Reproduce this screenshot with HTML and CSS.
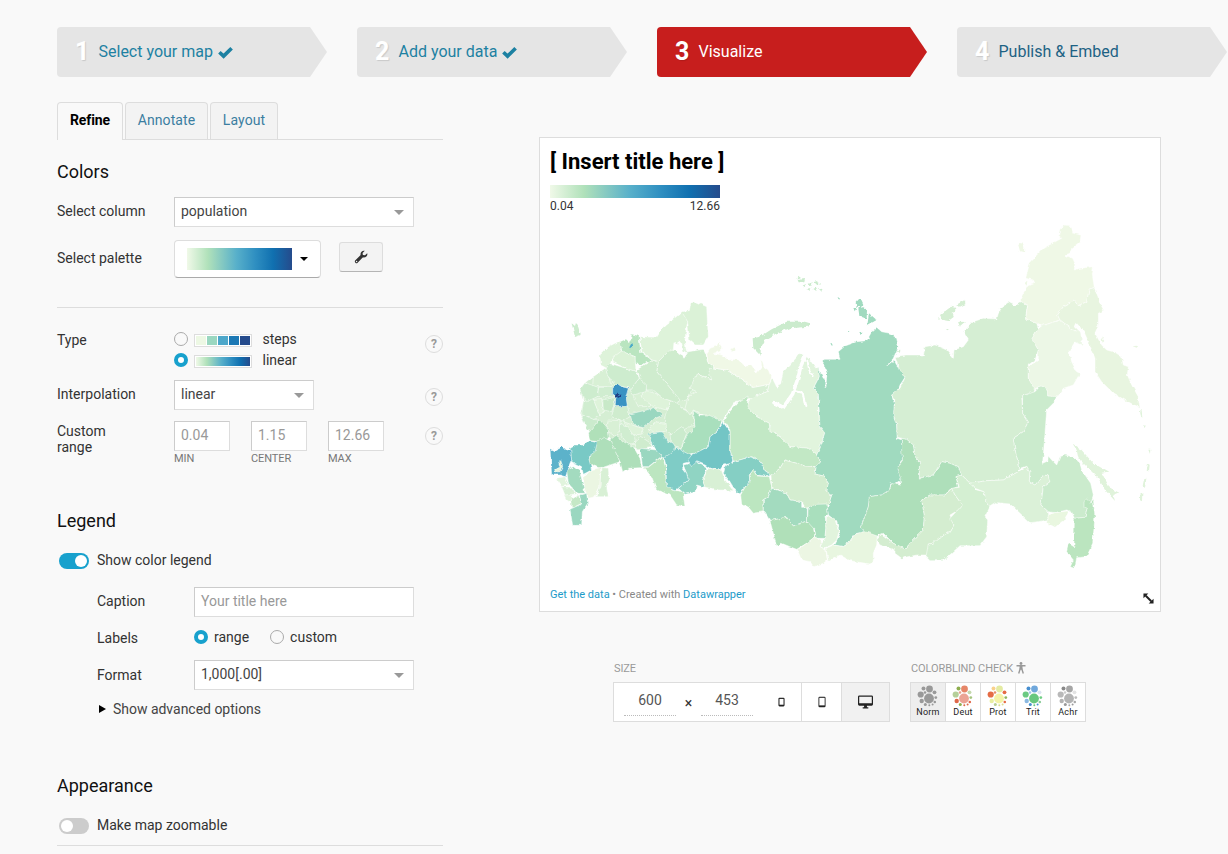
FILE: index.html
```
<!DOCTYPE html>
<html lang="en">
<head>
<meta charset="utf-8">
<title>Visualize map</title>
<link rel="stylesheet" href="styles.css">
</head>
<body>
<nav class="steps">
  <a class="step done"><b>1</b><span>Select your map</span><svg class="check" viewBox="0 0 14 12"><path d="M1.300 5.800 5.200 9.400 12.700 2"/></svg></a>
  <a class="step done"><b>2</b><span>Add your data</span><svg class="check" viewBox="0 0 14 12"><path d="M1.300 5.800 5.200 9.400 12.700 2"/></svg></a>
  <a class="step active"><b>3</b><span>Visualize</span></a>
  <a class="step next"><b>4</b><span>Publish &amp; Embed</span></a>
</nav>
<main class="main">
<section class="controls">
  <div class="tabs"><a class="tab on">Refine</a><a class="tab t2">Annotate</a><a class="tab t3">Layout</a></div>
  <h3 class="h-colors">Colors</h3>
  <div class="row r-column"><label>Select column</label><div class="select w240">population<i></i></div></div>
  <div class="row r-palette"><label>Select palette</label><div class="palette"><span class="ramp"></span><i></i></div><div class="tool"><svg viewBox="0 0 14 14"><path d="M2.5 11.5 7.8 6.2" stroke="#333" stroke-width="3.2" stroke-linecap="round"/><path d="M13.2 3.2 11 5.2 8.8 4.9 8.6 3 10.8.8C8.600 .2 6.600 1.600 6.500 3.900 6.500 6 8 7.400 9.800 7.400 12.400 7.400 13.900 5.200 13.200 3.200Z" fill="#333"/><circle cx="2.600" cy="11.500" r=".7" fill="#f3f3f3"/></svg></div></div>
  <hr class="rule">
  <div class="row r-type"><label>Type</label><div class="types">
    <div class="opt"><span class="radio"></span><span class="swatch steps5"><u class="c1"></u><u class="c2"></u><u class="c3"></u><u class="c4"></u><u class="c5"></u></span>steps</div>
    <div class="opt"><span class="radio sel"></span><span class="swatch"><u class="ramp"></u></span>linear</div>
  </div><span class="help">?</span></div>
  <div class="row r-interp"><label>Interpolation</label><div class="select w140">linear<i></i></div><span class="help">?</span></div>
  <div class="row r-range"><label>Custom<br>range</label><div class="ranges"><div><div class="num">0.04</div><small>MIN</small></div><div><div class="num">1.15</div><small>CENTER</small></div><div><div class="num">12.66</div><small>MAX</small></div></div><span class="help">?</span></div>
  <h3 class="h-legend">Legend</h3>
  <div class="row r-toggle"><span class="toggle sel"></span>Show color legend</div>
  <div class="row sub r-caption"><label>Caption</label><div class="select w220 hint">Your title here</div></div>
  <div class="row sub r-labels"><label>Labels</label><span class="radio sel"></span><span class="rl">range</span><span class="radio"></span><span class="rl">custom</span></div>
  <div class="row sub r-format"><label>Format</label><div class="select w220">1,000[.00]<i></i></div></div>
  <div class="row sub r-adv"><i class="tri"></i>Show advanced options</div>
  <h3 class="h-appear">Appearance</h3>
  <div class="row r-toggle"><span class="toggle"></span>Make map zoomable</div>
  <hr class="rule last">
</section>
<section class="preview">
  <div class="chart">
    <h1>[ Insert title here ]</h1>
    <div class="legend ramp"></div>
    <div class="ends"><span>0.04</span><span>12.66</span></div>
    <svg class="map" viewBox="540 215 620 365">
      <defs><filter id="coast" filterUnits="userSpaceOnUse" x="540" y="215" width="620" height="365" color-interpolation-filters="sRGB"><feTurbulence type="fractalNoise" baseFrequency=".22" numOctaves="2" seed="4"/><feDisplacementMap in="SourceGraphic" scale="3.5" xChannelSelector="R" yChannelSelector="G"/></filter></defs>
      <g filter="url(#coast)" class="regions">
      <!-- central base -->
      <g transform="translate(540 380) scale(.33333)">
        <path fill="#d5eed3" d="M120 28 135 8 158-10 210-30 300-10 350-25 420 55 480 0 560 70 540 100 460 92 465 140 440 210 400 215 380 180 330 160 340 200 300 210 220 180 150 155 120 105 130 65Z"/>
        <path fill="#d0edd0" d="M130 65 160 55 180 105 160 120 125 100Z"/>
        <path fill="#def3da" d="M160 58 185 55 190 95 180 108Z"/>
        <path fill="#cbebcd" d="M122 100 160 118 176 120 150 157 135 135Z"/>
        <path fill="#c8e9c8" d="M188 60 225 52 222 72 215 95 190 90Z"/>
        <path fill="#cfecce" d="M222 80 262 76 270 110 245 125 215 110Z"/>
        <path fill="#d8f0d5" d="M205 120 240 122 240 150 225 170 200 150Z"/>
        <path fill="#d0edd0" d="M243 130 280 150 288 195 262 190 238 160Z"/>
        <path fill="#cfecce" d="M300 168 340 195 332 203 290 210 285 190Z"/>
        <path fill="#def3da" d="M250 125 305 145 310 162 280 165Z"/>
        <path fill="#d8f0d5" d="M275 40 300 30 340 60 330 80 295 80Z"/>
        <path fill="#def3da" d="M300 50 320 32 360 45 395 65 380 90 340 80Z"/>
        <path fill="#cfecce" d="M380 90 395 65 415 50 425 85 462 105 460 135 430 150 395 165 370 150 375 110Z"/>
        <path fill="#def3da" d="M345 125 378 130 380 152 350 160 325 150Z"/>
        <path fill="#cbebcd" d="M390 165 425 140 440 160 422 207 395 198Z"/>
        <path fill="#d8f0d5" d="M425 55 440 30 480 -10 560 20 550 70 500 80 480 105 455 98 430 85 412 70Z"/>
      </g>
      <g transform="translate(540 290) scale(.33333)">
        <path fill="#dbf2d7" d="M425 65 448 62 452 40 468 36 500 50 502 90 505 140 490 165 465 165 448 150 443 95 430 85Z"/>
        <path fill="#def3da" d="M425 65 415 75 390 95 370 110 350 142 300 140 305 185 335 210 355 215 400 180 402 155 415 165 418 150 425 160 430 185 440 192 435 150 440 110 443 95Z"/>
        <path fill="#cfecce" d="M355 215 385 185 402 178 425 195 432 205 445 185 490 178 498 195 505 220 525 235 515 270 470 250 460 295 440 330 420 335 395 300 370 270 350 245Z"/>
        <path fill="#bae5c0" d="M275 132 297 137 302 185 335 210 300 228 285 220 285 200 245 185 240 155 258 147 270 158Z"/>
        <path fill="#def3da" d="M240 152 245 185 215 210 210 225 200 235 182 225 180 195 205 170Z"/>
        <path fill="#dbf2d7" d="M245 183 285 200 288 245 270 240 215 215 222 200Z"/>
        <path fill="#cdecce" d="M210 220 290 245 298 265 275 295 245 290 225 280 205 265 195 240Z"/>
        <path fill="#d8f0d5" d="M160 260 195 235 207 265 215 290 175 290 158 290Z"/>
        <path fill="#cfecce" d="M290 240 335 210 355 215 350 245 420 330 415 340 370 325 340 300 320 300 300 265Z"/>
        <path fill="#cdecce" d="M298 265 320 285 318 305 280 315 270 300Z"/>
        <path fill="#cdecce" d="M120 298 135 278 175 292 172 320 140 335 125 315Z"/>
        <path fill="#d0edd0" d="M176 292 218 292 222 320 172 320Z"/>
        <path fill="#3a93c3" d="M218 295 232 280 245 290 265 295 258 320 262 348 225 350 228 325 218 310Z"/>
        <path class="capital" d="M224 324 243 313M226 316 234 314"/>
        <path class="isle" fill="#4dabc8" d="M268 172 276 157 279 166 272 178Z"/>
        <path class="isle" fill="#cdecce" d="M95 100 105 108 108 98 115 112 122 135 105 141Z"/>
      </g>
      <!-- south-west -->
      <g transform="translate(540 380) scale(.33333)">
        <path fill="#9ad7c0" d="M270 102 320 90 340 83 370 105 345 115 310 143 290 138 275 120Z"/>
        <path fill="#b0e0b9" d="M178 118 205 150 208 175 175 185 150 182 145 160Z"/>
        <path fill="#aedfba" d="M150 200 190 172 215 185 240 245 195 260 180 265 165 255 145 260 148 230Z"/>
        <path fill="#79c9c5" d="M90 205 105 195 130 195 145 182 172 188 165 215 145 230 155 270 130 283 125 260 95 245Z"/>
        <path fill="#5cb2ca" d="M30 205 45 212 68 200 80 210 92 210 95 245 88 260 75 290 60 285 35 285Z"/>
        <path fill="#e8f6e0" d="M56 245 62 240 68 260 60 275 46 276 44 268 60 262Z"/>
        <path fill="#aedfba" d="M210 180 230 165 240 180 280 200 300 235 305 263 265 265 248 275 240 245Z"/>
        <path fill="#9ad7c0" d="M300 205 350 210 370 225 325 260 308 260Z"/>
        <path fill="#bce6c0" d="M310 262 325 262 368 228 376 260 378 300 395 330 430 335 430 345 435 380 410 375 390 345 350 330 335 290Z"/>
        <path fill="#85cfc4" d="M325 160 365 155 380 180 405 195 405 220 372 235 345 205Z"/>
        <path fill="#90d4c3" d="M470 245 500 265 488 300 495 322 470 315 465 337 435 343 415 325 445 300 440 280 430 255Z"/>
        <path fill="#7fccc6" d="M372 235 410 205 435 210 475 240 430 250 428 265 440 280 445 300 405 333 380 320 378 260Z"/>
        <path fill="#a3dbbf" d="M80 270 100 260 120 275 135 340 110 340 85 310Z"/>
        <path fill="#ebf6e2" d="M128 290 155 270 182 262 180 320 165 350 145 355 135 330Z"/>
        <path fill="#d8f0d5" d="M183 262 205 265 208 300 200 320 205 350 170 350 180 320Z"/>
        <path fill="#e1f4dd" d="M48 295 75 290 88 315 65 320ZM72 345 95 340 98 358 82 365Z"/>
        <path fill="#d8f0d5" d="M65 320 95 322 108 342 75 345Z"/>
        <path fill="#c5e8c6" d="M92 360 115 345 125 370 95 385Z"/>
        <path fill="#9ad7c0" d="M118 345 140 340 143 370 127 395 125 436 98 436 90 388 125 372Z"/>
      </g>
      <!-- urals and west siberia -->
      <g transform="translate(690 270) scale(.33333)">
        <path fill="#d9f0d6" d="M55 295 75 295 110 300 150 325 190 352 238 343 232 365 180 385 135 395 105 440 98 457 60 445 10 420 0 435-15 415-5 380 20 365 0 355 20 310 65 330Z"/>
        <path fill="#f0f8e6" d="M50 250 60 235 80 228 85 215 98 235 88 245 70 250 95 255 115 270 140 268 160 280 165 290 185 285 200 310 215 290 212 270 218 275 222 290 235 300 245 325 238 343 190 352 150 325 110 300 75 295 55 280ZM120 238 130 232 138 240 130 247Z"/>
        <path fill="#e1f4dd" d="M238 343 247 325 262 355 272 340 280 305 320 262 325 250 345 256 360 270 378 295 388 290 388 320 370 355 385 370 385 420 390 470 405 490 395 520 380 555 355 535 330 532 300 530 270 500 240 485 238 460 200 440 170 415 180 385 232 365Z"/>
        <path fill="#a0dabf" d="M402 268 450 268 445 245 465 228 500 215 530 212 545 185 560 172 575 185 600 190 620 205 625 230 610 265 590 288 612 270 620 285 635 300 645 322 630 345 620 370 605 375 612 400 615 440 612 440 620 465 622 505 635 510 637 540 638 570 625 590 635 630 615 645 602 642 600 660 575 675 540 680 535 710 522 750 512 770 525 785 495 792 475 820 460 830 433 825 450 790 440 755 415 735 412 720 415 705 425 675 410 665 415 640 400 618 375 612 378 590 392 575 380 555 395 520 405 490 390 470 385 370 370 355 388 320 385 290 402 330 410 320 398 285Z"/>
        <path class="isle" fill="#cbebcd" d="M188 205 210 200 245 178 290 155 345 155 360 160 355 170 300 175 260 190 225 210 212 235 212 257 190 235Z"/>
        <path class="isle" fill="#cbebcd" d="M324 17 333 24 323 29ZM323 30 345 27 343 37 326 37ZM355 42 368 37 364 51ZM372 36 382 33 381 44ZM349 56 364 54 361 63ZM369 56 380 53 379 63ZM384 58 398 56 393 65ZM385 42 391 37 392 44ZM338 45 346 43 344 52Z"/>
        <path class="isle" fill="#a0dabf" d="M510 84 520 105 512 112 499 110 497 98ZM505 115 520 112 531 118 530 146 508 138ZM537 130 560 150 532 166ZM490 113 500 114 494 124ZM442 83 450 82 448 89ZM421 220 429 220 425 227ZM474 183 478 183 476 188ZM511 190 517 187 515 195Z"/>
        <g class="water"><path stroke-width="11" d="M346 256 332 290 322 330 308 372 280 412 252 398"/><path stroke-width="6" d="M312 362 338 368 346 408"/><path stroke-width="6" d="M352 272 358 300 368 318M394 276 408 310 406 350"/></g>
      </g>
      <g transform="translate(690 400) scale(.33333)">
        <path fill="#a9dfbd" d="M10 32 30 45 55 45 95 62 85 90 60 110 55 140 15 160-5 162-28 150-12 110 15 80Z"/>
        <path fill="#c2e8c5" d="M172 15 180 30 200 50 238 70 240 95 270 110 300 140 330 142 355 145 380 165 392 185 378 200 345 198 320 190 285 180 270 205 245 225 225 212 210 185 185 170 130 185 120 150 120 90 103 65 115 40 145 5 174-12Z"/>
        <path fill="#73c5c5" d="M98 65 120 95 120 150 128 180 125 190 100 195 90 210 60 205 45 195 20 185 5 200-8 182 5 165 15 160 55 140 60 110 85 90Z"/>
        <path fill="#85cfc4" d="M100 220 105 200 130 185 185 170 210 185 225 212 240 222 235 230 200 225 190 210 178 225 180 250 165 260 150 282 135 270 120 245Z"/>
        <path fill="#d8f0d5" d="M55 205 95 212 105 240 130 272 90 270 45 262 38 240Z"/>
        <path fill="#bce6c0" d="M190 210 200 228 238 230 245 262 235 290 218 300 220 335 190 340 178 325 155 312 152 285 165 262 180 248 178 225Z"/>
        <path fill="#d4edd0" d="M245 262 243 225 270 205 285 180 320 190 345 198 378 200 375 222 400 228 415 250 410 275 425 285 415 315 380 315 345 322 335 305 300 300 290 280Z"/>
        <path fill="#a3dbbf" d="M220 300 235 290 245 265 290 280 300 300 335 305 335 322 352 322 352 360 345 365 310 378 290 352 240 362 225 338 220 335Z"/>
        <path fill="#b0e0b9" d="M240 362 290 352 310 378 345 365 368 372 375 410 350 430 320 448 300 440 275 430 260 437Z"/>
        <path fill="#a9dfbd" d="M355 320 380 313 410 312 415 345 405 345 408 380 405 415 378 415 375 390 352 365Z"/>
        <path fill="#e1f4dd" d="M410 345 435 360 447 395 440 420 425 435 400 445 390 440 405 415Z"/>
        <path fill="#ecf6e3" d="M322 450 350 430 375 410 395 425 390 440 408 450 412 480 400 490 372 500 360 485 335 480Z"/>
        <path fill="#e8f6e0" d="M408 445 430 435 460 440 475 430 495 402 530 393 562 408 560 435 550 460 550 485 540 492 480 482 450 465 415 485Z"/>
      </g>
      <!-- far east, northern half -->
      <g transform="translate(880 215) scale(.33333)">
        <path fill="#d5eed3" d="M45 425 75 420 130 420 135 395 165 390 200 405 220 430 222 405 250 395 265 375 250 350 280 320 310 310 350 312 360 280 385 262 405 272 425 260 443 270 437 310 470 325 475 340 458 370 475 405 465 435 445 450 445 490 465 520 462 535 425 543 428 595 445 620 430 650 400 670 405 705 420 760 415 770 370 795 320 797 270 805 245 780 235 755 210 745 185 740 160 780 118 790 118 740 105 725 100 690 80 673 52 667 50 625 40 600 45 555 35 540 60 520 75 488 55 455Z"/>
        <path class="isle" fill="#d5eed3" d="M180 300 200 285 213 275 225 278 226 290 218 293 222 305 205 318 188 315ZM228 270 255 254 256 268 238 276ZM234 320 258 321 240 336ZM50 406 61 404 60 414ZM174 310 180 312 178 318ZM198 342 207 342 202 346Z"/>
        <path fill="#eff8e6" d="M418 258 440 215 465 205 460 195 437 190 450 140 490 100 545 70 535 60 540 42 560 25 575 42 580 55 603 60 600 80 575 100 570 115 555 120 578 130 585 145 583 165 600 160 640 155 637 180 643 218 628 222 620 260 595 272 583 258 550 275 533 300 540 315 485 333 470 325 437 310 443 270 425 260Z"/>
        <path class="isle" fill="#eff8e6" d="M415 90 427 81 433 96 432 112 420 109ZM432 202 442 198 440 212Z"/>
        <path fill="#e8f5e0" d="M643 218 660 265 672 287 655 295 655 330 645 355 665 390 680 405 705 412 725 425 730 450 745 455 742 480 755 510 775 545 780 580 740 558 700 535 665 500 645 470 645 430 625 380 612 350 590 325 585 335 600 350 580 345 540 315 533 300 550 275 583 258 595 272 620 260 628 222Z"/>
        <path class="isle" fill="#e8f5e0" d="M663 364 673 378 668 383ZM757 393 775 392 770 398Z"/>
        <path fill="#ecf7e6" d="M485 333 540 315 580 345 602 352 607 390 585 380 567 410 575 440 590 470 600 475 580 510 550 520 530 550 503 543 500 525 483 513 465 525 445 490 445 455 475 435 475 405 455 372 475 340Z"/>
      </g>
      <!-- far east, southern half -->
      <g transform="translate(880 400) scale(.33333)">
        <path fill="#aedfba" d="M65 115 80 118 100 135 105 170 118 185 118 235 160 225 185 185 210 190 235 200 245 225 228 230 235 260 210 268 195 285 150 285 125 300 133 345 130 390 100 420 75 447 40 430 10 400-8 408-45 395-58 380-45 350-35 320-32 290 5 285 30 268 35 250 60 255 62 235 50 205 68 185 65 150Z"/>
        <path fill="#d4edd0" d="M5 402 40 430 75 447 100 420 130 390 133 345 125 300 150 285 195 285 215 265 225 285 247 315 235 330 210 345 222 375 210 395 175 415 160 430 145 432 145 465 110 465 65 475 45 460 45 450 0 435-10 420Z"/>
        <path fill="#d4efd2" d="M228 230 245 225 270 250 290 270 312 275 318 300 330 320 315 350 323 360 320 410 300 437 240 437 215 460 190 482 150 482 138 470 145 432 160 430 175 415 210 395 222 375 210 355 247 315 225 285 215 265 238 262Z"/>
        <path fill="#dbf1d8" d="M270 250 320 242 370 240 415 215 440 198 450 215 448 245 465 255 490 225 505 228 510 245 490 260 483 315 505 335 508 358 475 365 450 368 420 340 390 312 350 308 330 320 318 300 312 275 285 265Z"/>
        <path fill="#cbebcd" d="M428-12 465-25 480-42 500-35 503-12 530-10 520 10 500 30 495 100 488 190 503 183 505 168 515 180 530 195 540 170 555 165 580 170 600 190 605 210 632 250 640 285 632 310 620 330 615 352 583 355 575 335 560 330 525 338 505 335 483 315 490 260 510 245 505 228 490 225 465 255 448 245 450 215 440 198 420 205 405 150 400 115 430 95 445 65 428 40Z"/>
        <path fill="#e9f7e0" d="M505 345 525 338 568 332 552 360 525 382 503 370Z"/>
        <path fill="#bbe5bf" d="M640 298 645 350 638 430 620 470 590 473 587 490 582 505 571 500 580 480 560 455 565 430 582 440 583 355 615 352 622 325 612 320 612 305 622 295 630 310Z"/>
        <path class="isle" fill="#e0f3db" d="M578 131 600 145 640 190 685 215 665 218 690 265 718 278 700 285 705 303 675 270 655 235 625 205 595 175 590 150Z"/>
        <path class="isle" fill="#e0f3db" d="M780 285 787 279 786 304 780 301ZM788 260 793 237 799 236 795 263ZM800 212 804 191 809 194 807 214ZM805 149 811 149 810 162ZM780 30 785 31 787 53 782 49ZM789 76 797 78 793 84Z"/>
      </g>
      </g>
    </svg>
    <div class="foot"><a>Get the data</a> • Created with <a>Datawrapper</a></div>
    <svg class="resize" viewBox="0 0 12 12"><path d="M3 3 9 9" stroke="#222" stroke-width="2.200"/><path d="M.5.5H5.800L.5 5.800ZM11.500 11.500H6.200L11.500 6.200Z" fill="#222"/></svg>
  </div>
  <div class="options">
    <div class="size"><h4>SIZE</h4><div class="box"><div class="dims"><span>600</span><em>×</em><span>453</span></div>
      <div class="dev d1"><svg width="7" height="10" viewBox="0 0 8 11"><rect x=".5" y=".5" width="7" height="10" rx="1.300" fill="#222"/><path fill="#fff" d="M1.700 2H6.300V8.600H1.700Z"/></svg></div>
      <div class="dev d2"><svg width="8" height="12" viewBox="0 0 9 13"><rect x=".5" y=".5" width="8" height="12" rx="1.400" fill="#222"/><path fill="#fff" d="M1.500 1.800H7.500V10.300H1.500Z"/></svg></div>
      <div class="dev d3"><svg width="15" height="14" viewBox="0 0 16 14"><path fill="#222" fill-rule="evenodd" d="M1.500 0H14.500Q16 0 16 1.500V9.500Q16 11 14.500 11H9.500V12.500H11V14H5V12.500H6.500V11H1.500Q0 11 0 9.500V1.500Q0 0 1.500 0ZM1.300 1.300V8.200H14.700V1.300Z"/></svg></div></div></div>
    <div class="cb"><h4>COLORBLIND CHECK <svg width="10" height="12" viewBox="0 0 10 12"><circle cx="5" cy="1.500" r="1.400" fill="#999"/><path d="M.5 3.800H9.500M5 3.500V7.500M4.300 6.500 2.700 11.500M5.700 6.500 7.300 11.500" stroke="#999" stroke-width="1.400" fill="none"/><path d="M3.500 4H6.500V7.500H3.500Z" fill="#999"/></svg></h4><div class="box">
      <div class="vis cur"><svg viewBox="0 0 22 22"><g fill="#999"><circle cx="12" cy="13.500" r="4.900"/><circle cx="12.500" cy="4" r="3.400"/><circle cx="3.700" cy="9.500" r="3.100"/><circle cx="4.700" cy="16" r="2.200"/><circle cx="6.500" cy="3.600" r="2"/><circle cx="17.500" cy="7.300" r="1.900"/><circle cx="8" cy="7.500" r="1.300"/><circle cx="18.800" cy="12.600" r="1.400"/><circle cx="17.800" cy="17" r="1.300"/><circle cx="8.300" cy="19.600" r="1.500"/><circle cx="12.300" cy="20.300" r="1"/><circle cx="15.600" cy="19.400" r="1"/></g></svg>Norm</div>
      <div class="vis"><svg viewBox="0 0 22 22"><circle cx="12" cy="13.500" r="4.900" fill="#eba394"/><circle cx="12.500" cy="4" r="3.400" fill="#e68668"/><circle cx="3.700" cy="9.500" r="3.100" fill="#b5cf99"/><circle cx="4.700" cy="16" r="2.200" fill="#df6849"/><circle cx="6.500" cy="3.600" r="2" fill="#8eae4f"/><circle cx="17.500" cy="7.300" r="1.900" fill="#c5d9ad"/><circle cx="8" cy="7.500" r="1.300" fill="#e5a18c"/><circle cx="18.800" cy="12.600" r="1.400" fill="#a5c47f"/><circle cx="17.800" cy="17" r="1.300" fill="#df6849"/><circle cx="8.300" cy="19.600" r="1.500" fill="#8eae4f"/><circle cx="12.300" cy="20.300" r="1" fill="#df6849"/><circle cx="15.600" cy="19.400" r="1" fill="#df6849"/></svg>Deut</div>
      <div class="vis"><svg viewBox="0 0 22 22"><circle cx="12" cy="13.500" r="4.900" fill="#f4f3a7"/><circle cx="12.500" cy="4" r="3.400" fill="#e4eba2"/><circle cx="3.700" cy="9.500" r="3.100" fill="#e56c45"/><circle cx="4.700" cy="16" r="2.200" fill="#e9efa1"/><circle cx="6.500" cy="3.600" r="2" fill="#f9d18c"/><circle cx="17.500" cy="7.300" r="1.900" fill="#e56c45"/><circle cx="8" cy="7.500" r="1.300" fill="#e88e68"/><circle cx="18.800" cy="12.600" r="1.400" fill="#91b65e"/><circle cx="17.800" cy="17" r="1.300" fill="#e56c45"/><circle cx="8.300" cy="19.600" r="1.500" fill="#b9cf91"/><circle cx="12.300" cy="20.300" r="1" fill="#d9dd91"/><circle cx="15.600" cy="19.400" r="1" fill="#d9dd91"/></svg>Prot</div>
      <div class="vis"><svg viewBox="0 0 22 22"><circle cx="12" cy="13.500" r="4.900" fill="#67c77e"/><circle cx="12.500" cy="4" r="3.400" fill="#70a8dc"/><circle cx="3.700" cy="9.500" r="3.100" fill="#6bca82"/><circle cx="4.700" cy="16" r="2.200" fill="#8bb9e2"/><circle cx="6.500" cy="3.600" r="2" fill="#478fd0"/><circle cx="17.500" cy="7.300" r="1.900" fill="#dce4f2"/><circle cx="8" cy="7.500" r="1.300" fill="#a5c5e5"/><circle cx="18.800" cy="12.600" r="1.400" fill="#70cf85"/><circle cx="17.800" cy="17" r="1.300" fill="#8acb98"/><circle cx="8.300" cy="19.600" r="1.500" fill="#478fd0"/><circle cx="12.300" cy="20.300" r="1" fill="#67c77e"/><circle cx="15.600" cy="19.400" r="1" fill="#478fd0"/></svg>Trit</div>
      <div class="vis"><svg viewBox="0 0 22 22"><circle cx="12" cy="13.500" r="4.900" fill="#b4b4b4"/><circle cx="12.500" cy="4" r="3.400" fill="#a6a6a6"/><circle cx="3.700" cy="9.500" r="3.100" fill="#b9b9b9"/><circle cx="4.700" cy="16" r="2.200" fill="#b3b3b3"/><circle cx="6.500" cy="3.600" r="2" fill="#898989"/><circle cx="17.500" cy="7.300" r="1.900" fill="#e3e3e3"/><circle cx="8" cy="7.500" r="1.300" fill="#ccc"/><circle cx="18.800" cy="12.600" r="1.400" fill="#bbb"/><circle cx="17.800" cy="17" r="1.300" fill="#aaa"/><circle cx="8.300" cy="19.600" r="1.500" fill="#999"/><circle cx="12.300" cy="20.300" r="1" fill="#aaa"/><circle cx="15.600" cy="19.400" r="1" fill="#999"/></svg>Achr</div>
    </div></div>
  </div>
</section>
</main>
</body>
</html>
```
FILE: styles.css
```
* { box-sizing: border-box; }
html, body { margin: 0; }
body { width: 1228px; height: 854px; overflow: hidden; background: #f9f9f9; font: 14px/20px Roboto, sans-serif; color: #333; }
h1, h3, h4 { margin: 0; }
u { text-decoration: none; }
.ramp { background: linear-gradient(90deg, #f0f9e8 0%, #b0e1ba 20%, #58b0ca 47%, #2f8fc1 65%, #1070b0 82%, #254b8c 100%); }

.steps { display: flex; gap: 30px; padding: 27px 0 0 57px; height: 77px; }
.step { flex: 0 0 270px; height: 50px; display: flex; align-items: center; padding-left: 18px; border-radius: 4px; background: #e5e5e5; clip-path: polygon(0 0, 253px 0, 270px 50%, 253px 100%, 0 100%); font-size: 16px; color: #1d81a2; }
.step b { width: 23.5px; font-size: 25px; font-weight: 700; color: #fff; text-shadow: 1px 1px 1px rgba(0, 0, 0, .12); }
.step.active { background: #c71e1d; color: #fff; }
.step.next { color: #1d6284; }
.check { width: 15px; height: 13px; margin-left: 5px; fill: none; stroke: #1d81a2; stroke-width: 3.4; }

.main { display: flex; }
.controls { width: 386px; margin-left: 57px; }
.tabs { display: flex; gap: 2px; margin-top: 25px; height: 38px; border-bottom: 1px solid #ddd; }
.tab { height: 37px; border: 1px solid #ddd; border-bottom: 0; border-radius: 4px 4px 0 0; text-align: center; line-height: 35px; background: #f3f3f3; color: #3b7ea1; width: 83px; letter-spacing: .1px; }
.tab.on { width: 66px; height: 38px; background: #f9f9f9; color: #000; font-weight: 700; letter-spacing: -.1px; }
.tab.t3 { width: 68px; }
h3 { font-size: 18px; font-weight: 400; line-height: 24px; color: #111; }
.h-colors { margin-top: 20px; }
.row { display: flex; align-items: flex-start; }
label { flex: 0 0 117px; line-height: 16px; }
.select { height: 30px; border: 1px solid #ccc; border-right-color: #ddd; border-bottom-color: #ddd; background: #fff; padding: 0 9px 0 6px; line-height: 26px; color: #444; display: flex; justify-content: space-between; align-items: flex-start; }
.select i { margin-top: 12px; border: 5px solid transparent; border-top-color: #999; border-bottom: 0; }
.w240 { width: 240px; } .w140 { width: 140px; } .w220 { width: 220px; }
.hint, .num { color: #999; }
.r-column { margin-top: 13px; }
.r-column label { margin-top: 6px; }
.r-palette { margin-top: 13px; }
.r-palette label { margin-top: 10px; }
.palette { width: 147px; height: 38px; border: 1px solid #ddd; border-bottom-color: #aaa; border-radius: 4px; background: #fff; display: flex; align-items: center; padding-left: 12px; gap: 8px; }
.palette .ramp { width: 105px; height: 22px; }
.palette i { border: 4px solid transparent; border-top-color: #000; border-bottom: 0; }
.tool { width: 44px; height: 30px; margin: 2px 0 0 18px; border: 1px solid #ddd; border-bottom-color: #b5b5b5; border-radius: 3px; background: #f3f3f3; display: flex; justify-content: center; align-items: center; }
.tool svg { width: 14px; height: 14px; }
.rule { margin: 29px 0 0; border: 0; height: 1px; background: #ddd; }
.r-type { margin-top: 20px; height: 42px; }
.r-type label { margin-top: 4px; }
.types { flex: 1; }
.opt { height: 21px; display: flex; align-items: center; }
.radio { flex: none; width: 14px; height: 14px; border: 1px solid #aaa; border-radius: 50%; background: #f9f9f9; }
.radio.sel { border: 4px solid #18a1cd; background: #fff; }
.swatch { width: 58px; height: 13px; margin: 4px 10.5px 0 6px; border: 1px solid #ddd; background: #fff; padding: 1px; display: flex; gap: 1px; }
.swatch u { flex: 1; }
.c1 { background: #edf8e4; } .c2 { background: #9ad7c0; } .c3 { background: #4da7ca; } .c4 { background: #1c79b5; } .c5 { background: #254b8c; }
.help { flex: none; width: 18px; height: 18px; margin-left: auto; border: 1px solid #ddd; border-radius: 50%; font-size: 12px; line-height: 16px; font-weight: 700; text-align: center; color: #999; }
.r-type .help { margin-top: 7px; }
.r-interp { margin-top: 10px; }
.r-interp label { margin-top: 6px; }
.r-interp .help { margin-top: 8px; }
.r-range { margin-top: 11px; }
.r-range label { margin-top: 2px; }
.r-range .help { margin-top: 6px; }
.ranges { display: flex; gap: 21px; }
.num { width: 56px; height: 30px; border: 1px solid #ccc; border-right-color: #ddd; border-bottom-color: #ddd; background: #fff; padding-left: 6px; line-height: 27px; }
small { display: block; font-size: 11px; line-height: 14px; padding-top: 1px; height: 14px; color: #777; letter-spacing: -.1px; }
.h-legend { margin-top: 44px; }
.r-toggle { margin-top: 16px; align-items: center; height: 22px; }
.toggle { width: 30px; height: 16px; margin: 2px 8px 0 2px; border-radius: 8px; background: #ccc; padding: 2px; }
.toggle::after { content: ""; display: block; width: 12px; height: 12px; border-radius: 50%; background: #fff; }
.toggle.sel { background: #18a1cd; }
.toggle.sel::after { margin-left: auto; }
.sub { margin-left: 40px; }
.sub label { flex-basis: 97px; }
.r-caption { margin-top: 16px; }
.r-caption label { margin-top: 6px; }
.r-labels { margin-top: 10px; height: 20px; align-items: center; }
.r-labels label { padding-top: 2px; }
.rl { margin-left: 6px; margin-right: 21px; }
.r-format { margin-top: 13px; }
.r-format label { margin-top: 7px; }
.r-adv { margin-top: 9px; align-items: center; letter-spacing: -.02px; color: #444; }
.tri { margin: 0 7px 0 2px; border: 4px solid transparent; border-left: 7px solid #000; border-right: 0; }
.h-appear { margin-top: 55px; }
.last { margin-top: 9px; }

.preview { margin: 60px 0 0 96px; }
.chart { position: relative; width: 622px; height: 475px; border: 1px solid #ddd; background: #fff; }
.chart h1 { padding: 11px 0 0 10px; font-size: 22px; line-height: 26px; font-weight: 700; color: #000; }
.legend { width: 170px; height: 13px; margin: 10px 0 0 10px; }
.ends { display: flex; justify-content: space-between; width: 170px; margin-left: 10px; font-size: 12px; line-height: 17px; }
.map { display: block; width: 620px; height: 365px; }
.regions path { stroke: #fff; stroke-opacity: .65; stroke-width: 2.2; stroke-linejoin: round; }
.regions .isle { stroke: none; }
.regions .capital { stroke: #213d83; stroke-width: 5; stroke-opacity: 1; }
.regions .water path { fill: none; stroke-width: 6; stroke-opacity: 1; stroke-linecap: round; }
.regions .water path:first-child { stroke-width: 11; }
.foot { padding-left: 10px; font-size: 11px; line-height: 18px; margin-top: 6px; color: #888; }
.foot a { color: #1d9bc9; }
.resize { position: absolute; right: 6px; bottom: 7px; width: 11px; height: 11px; }
.options { display: flex; margin: 48px 0 0 74px; gap: 20px; }
h4 { font-size: 11px; line-height: 16px; height: 16px; padding: 1px 0 0 1px; font-weight: 400; color: #999; letter-spacing: -.1px; }
h4 svg { vertical-align: -2px; }
.box { display: flex; width: max-content; height: 40px; margin-top: 6px; border: 1px solid #ddd; background: #fff; }
.dims { display: flex; padding: 4px 0 0 10px; width: 147px; }
.dims span { width: 52px; height: 29px; border-bottom: 1px dotted #bbb; text-align: center; line-height: 27px; color: #555; }
.dims em { width: 25px; text-align: center; font-style: normal; line-height: 32px; }
.dev { display: flex; align-items: center; justify-content: center; width: 40px; }
.d2 { border-left: 1px solid #ddd; }
.d3 { width: 48px; background: #f1f1f1; border-left: 1px solid #ddd; }
.vis { width: 35px; border-left: 1px solid #ddd; display: flex; flex-direction: column; align-items: center; font-size: 9px; line-height: 11px; letter-spacing: .2px; color: #222; }
.vis:first-child { border-left: 0; width: 34px; }
.vis svg { width: 22px; height: 22px; margin-top: 2px; }
.cur { background: #eee; }
```
